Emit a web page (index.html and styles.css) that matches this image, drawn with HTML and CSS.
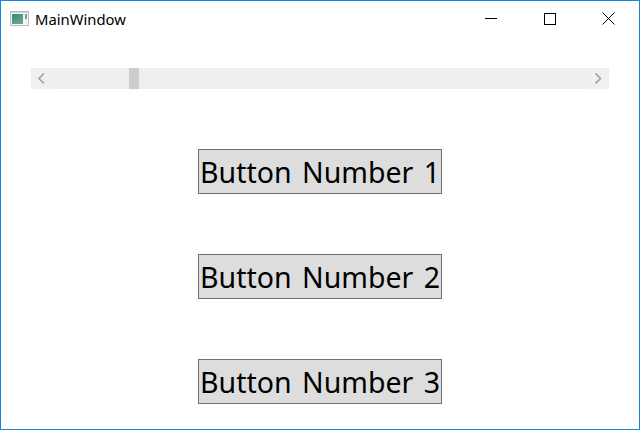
FILE: index.html
```html
<!DOCTYPE html>
<html lang="en">
<head>
<meta charset="utf-8">
<title>MainWindow</title>
<link rel="stylesheet" href="styles.css">
</head>
<body>
<div class="window">
  <header class="titlebar">
    <svg class="app-icon" width="19" height="15" viewBox="0 0 19 15">
      <defs>
        <linearGradient id="g" x1="0" y1="0" x2="0.6" y2="1">
          <stop offset="0" stop-color="#3f7f9c"/>
          <stop offset="1" stop-color="#66aa78"/>
        </linearGradient>
      </defs>
      <rect x="0.5" y="0.5" width="18" height="14" fill="#f6f6f6" stroke="#bcbcbc"/>
      <rect x="1" y="1" width="17" height="1" fill="#d4d4d4"/>
      <rect x="2" y="3" width="11" height="10" fill="url(#g)"/>
      <rect x="15" y="3" width="2" height="5" fill="#6fa5a0"/>
      <rect x="15" y="8" width="2" height="5" fill="#e6eeea"/>
    </svg>
    <span class="title">MainWindow</span>
    <div class="controls">
      <svg class="ctl" width="12" height="12" viewBox="0 0 12 12"><path d="M0 5.5H12" stroke="#000" fill="none"/></svg>
      <svg class="ctl ctl-max" width="12" height="12" viewBox="0 0 12 12"><rect x="0.5" y="0.5" width="11" height="11" stroke="#000" fill="none"/></svg>
      <svg class="ctl ctl-close" width="13" height="13" viewBox="0 0 13 13"><path d="M0.5 0.5L12.5 12.5M12.5 0.5L0.5 12.5" stroke="#000" fill="none"/></svg>
    </div>
  </header>
  <main class="content">
    <div class="scrollbar">
      <div class="cell">
        <svg width="8" height="11" viewBox="0 0 8 11"><path d="M7 0.5L2 5.5L7 10.5" stroke="#a0a0a0" stroke-width="1.6" fill="none"/></svg>
      </div>
      <div class="track"><div class="thumb"></div></div>
      <div class="cell">
        <svg width="8" height="11" viewBox="0 0 8 11"><path d="M0.5 0.5L5.5 5.5L0.5 10.5" stroke="#a0a0a0" stroke-width="1.6" fill="none"/></svg>
      </div>
    </div>
    <div class="buttons">
      <button class="btn">Button Number 1</button>
      <button class="btn">Button Number 2</button>
      <button class="btn">Button Number 3</button>
    </div>
  </main>
</div>
</body>
</html>
```
FILE: styles.css
```css
* { box-sizing: border-box; }
html, body { margin: 0; padding: 0; }
body { width: 640px; height: 430px; background: #fff; overflow: hidden; }
.window {
  width: 640px;
  height: 430px;
  border: 1px solid #1a86d8;
  background: #fff;
  display: flex;
  flex-direction: column;
}
.titlebar {
  height: 36px;
  flex: none;
  display: flex;
  align-items: center;
  padding-left: 9px;
}
.app-icon { flex: none; margin-top: -2px; }
.title {
  margin-left: 6px;
  font: 14.8px/20px "Noto Sans", sans-serif;
  color: #000;
  margin-top: -1px;
}
.controls {
  margin-left: auto;
  display: flex;
  align-items: center;
  padding-right: 24px;
  margin-top: -1px;
}
.ctl { display: block; flex: none; }
.ctl-max { margin-left: 47px; }
.ctl-close { margin-left: 46px; }
.content {
  flex: 1;
  padding: 31px 30px 0;
}
.scrollbar {
  height: 21px;
  background: #f0f0f0;
  display: flex;
}
.cell {
  flex: none;
  width: 20px;
  display: flex;
  align-items: center;
  justify-content: center;
}
.cell svg { display: block; }
.track { flex: 1; height: 100%; background: #efefef; }
.thumb {
  width: 10px;
  height: 100%;
  margin-left: 78px;
  background: #cdcdcd;
}
.buttons {
  display: flex;
  flex-direction: column;
  align-items: center;
  gap: 60px;
  margin-top: 60px;
}
.btn {
  width: 244px;
  height: 45px;
  padding: 2px 0 0;
  border: 1px solid #707070;
  border-radius: 0;
  background: #dddddd;
  color: #000;
  font: 28.5px/39px "Noto Sans", sans-serif;
  word-spacing: 3px;
  white-space: nowrap;
}
```
